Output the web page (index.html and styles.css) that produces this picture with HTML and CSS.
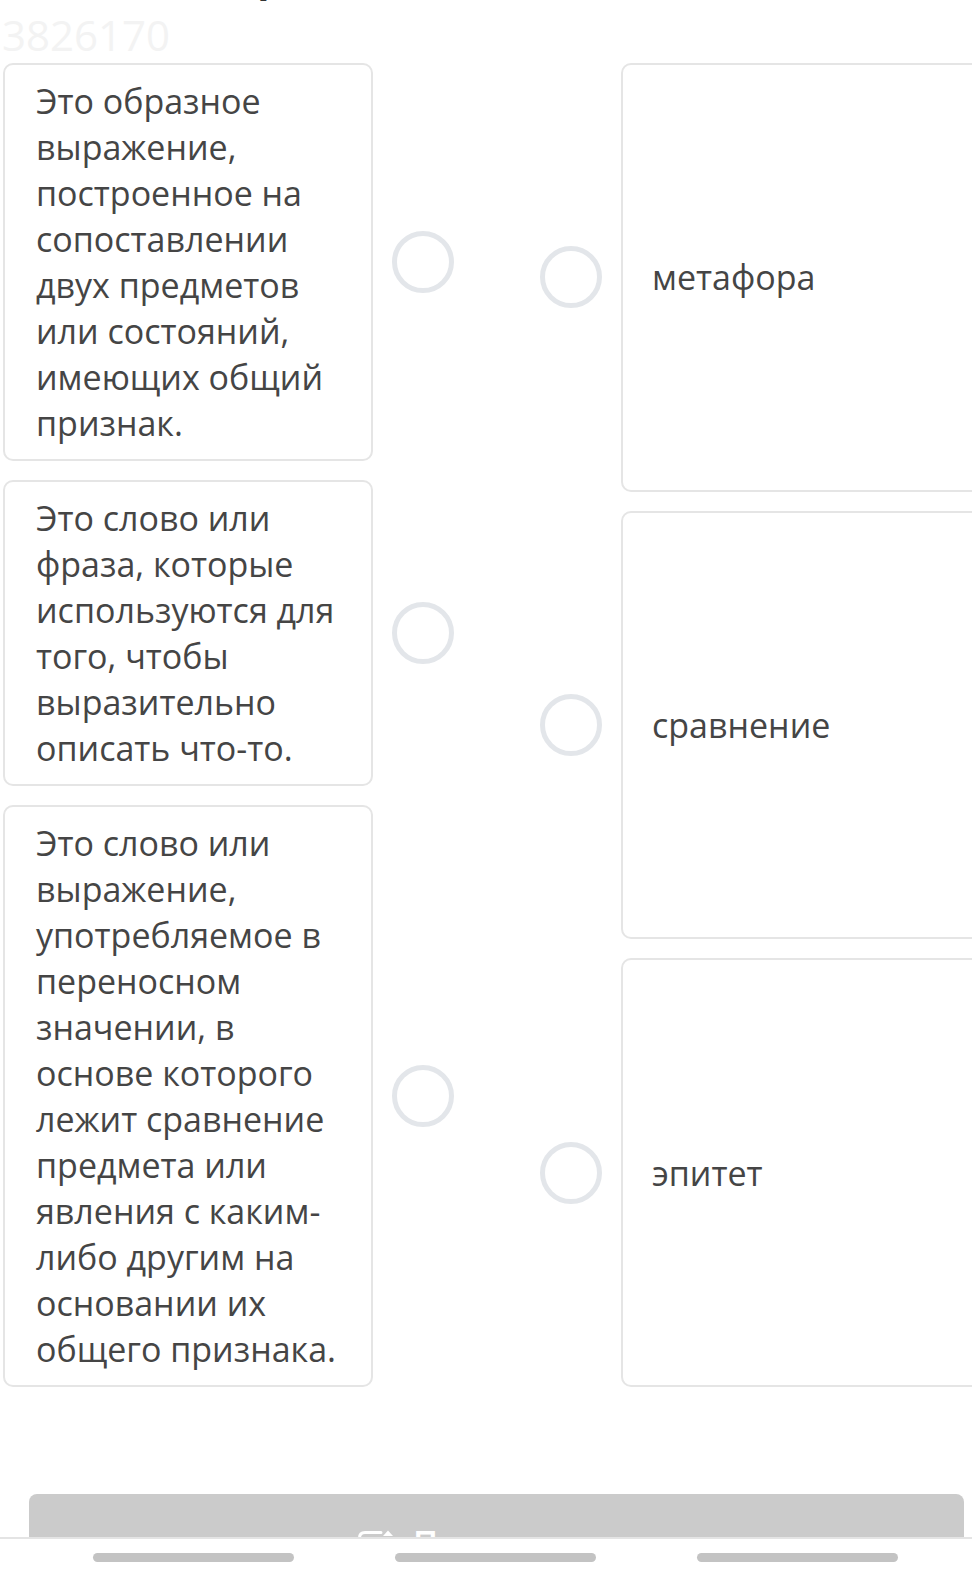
FILE: index.html
```html
<!DOCTYPE html>
<html lang="ru">
<head>
<meta charset="utf-8">
<title>3826170</title>
<link rel="stylesheet" href="styles.css">
</head>
<body>
<div class="page">
  <div class="title">Найдите пары</div>
  <div class="qid">3826170</div>

  <div class="match">
    <div class="col col-left">
      <div class="item">
        <div class="card">Это образное выражение, построенное на сопоставлении двух предметов или состояний, имеющих общий признак.</div>
        <span class="dot"></span>
      </div>
      <div class="item">
        <div class="card">Это слово или фраза, которые используются для того, чтобы выразительно описать что-то.</div>
        <span class="dot"></span>
      </div>
      <div class="item">
        <div class="card">Это слово или выражение, употребляемое в переносном значении, в основе которого лежит сравнение предмета или явления с каким-либо другим на основании их общего признака.</div>
        <span class="dot"></span>
      </div>
    </div>

    <div class="col col-right">
      <div class="item item-right">
        <span class="dot"></span>
        <div class="card card-option">метафора</div>
      </div>
      <div class="item item-right">
        <span class="dot"></span>
        <div class="card card-option">сравнение</div>
      </div>
      <div class="item item-right">
        <span class="dot"></span>
        <div class="card card-option">эпитет</div>
      </div>
    </div>
  </div>

  <div class="actions">
    <button class="btn" type="button">
      <svg class="btn-icon" width="44" height="36" viewBox="0 0 44 36" aria-hidden="true">
        <path d="M2.5 36 V8 Q2.5 2.5 8 2.5 H24" fill="none" stroke="#ffffff" stroke-width="3" stroke-linecap="round"/>
        <path d="M26 6 L31 0.5 L36 6 Z" fill="#ffffff"/>
        <path d="M20 30 L33 8" fill="none" stroke="#ffffff" stroke-width="4"/>
      </svg>
      <span class="btn-label">Проверить</span>
    </button>
  </div>
</div>

<nav class="navbar">
  <span class="pill"></span>
  <span class="pill"></span>
  <span class="pill"></span>
</nav>
</body>
</html>
```
FILE: styles.css
```css
html, body {
  margin: 0;
  padding: 0;
  background: #ffffff;
  overflow: hidden;
}

body {
  font-family: "Open Sans", "Noto Sans", "DejaVu Sans", sans-serif;
  color: #454545;
}

.page {
  width: 972px;
  overflow: hidden;
}

.title {
  font-size: 40px;
  line-height: 40px;
  font-weight: 700;
  color: #333333;
  margin-top: -43.5px;
  padding-left: 12px;
  white-space: nowrap;
  height: 40px;
}

.qid {
  margin-top: 17.5px;
  padding-left: 2px;
  font-size: 42px;
  line-height: 42px;
  color: #f3f3f3;
}

.match {
  display: flex;
  align-items: stretch;
  gap: 86px;
  margin-top: 7px;
  padding-left: 3px;
  width: 1100px;
}

.col {
  display: flex;
  flex-direction: column;
  gap: 19px;
  width: 451px;
  flex: 0 0 451px;
}

.item {
  display: flex;
  align-items: center;
  gap: 19px;
}

.item-right {
  flex: 1 1 0;
  align-items: stretch;
}

.item-right .dot {
  align-self: center;
}

.card {
  box-sizing: border-box;
  width: 370px;
  flex: 0 0 370px;
  border: 2px solid #e5e5e5;
  border-radius: 10px;
  padding: 13px 26px 13px 31px;
  font-size: 34px;
  line-height: 46px;
  background: #ffffff;
}

.card-option {
  display: flex;
  align-items: center;
  padding-left: 29px;
}

.dot {
  box-sizing: border-box;
  flex: 0 0 62px;
  width: 62px;
  height: 62px;
  border: 5px solid #e3e6ea;
  border-radius: 50%;
}

.actions {
  margin-top: 107px;
  padding-left: 29px;
}

.btn {
  box-sizing: border-box;
  width: 935px;
  height: 72px;
  border: none;
  border-radius: 8px;
  background: #cbcbcb;
  display: flex;
  align-items: flex-start;
  gap: 12px;
  padding: 36px 0 0 328px;
  font-family: inherit;
  cursor: default;
}

.btn-icon {
  display: block;
  flex: 0 0 44px;
}

.btn-label {
  color: #ffffff;
  font-size: 34px;
  line-height: 34px;
  font-weight: 600;
  margin-top: -4px;
}

.navbar {
  position: fixed;
  left: 0;
  right: 0;
  bottom: 0;
  height: 40px;
  box-sizing: border-box;
  background: #ffffff;
  border-top: 2px solid #e4e4e4;
  display: flex;
  align-items: flex-start;
  gap: 101px;
  padding: 14px 0 0 93px;
}

.pill {
  display: block;
  width: 201px;
  height: 9px;
  border-radius: 5px;
  background: #c3c3c3;
}
```
